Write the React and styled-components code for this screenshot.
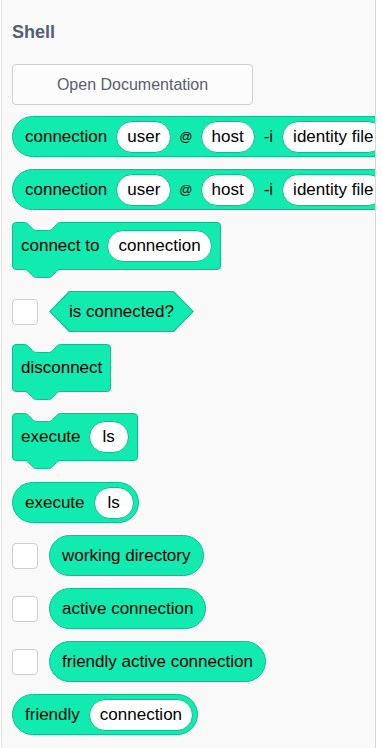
import React from 'react'
import styled, {createGlobalStyle} from 'styled-components'

const GREEN = '#12ebb0'
const EDGE = '#0dbf8d'
const PANEL = '#f9f9f9'

// scratch style notch: 36 wide, 8 deep
const CURVE = 'c 2,0 3,1 4,2 l 4,4 c 1,1 2,2 4,2 h 12 c 2,0 3,-1 4,-2 l 4,-4 c 1,-1 2,-2 4,-2'

const GlobalStyle = createGlobalStyle`
  html, body {
    margin: 0;
    padding: 0;
    background: #fff;
  }
  body {
    font-family: "Liberation Sans", Arial, sans-serif;
  }
`

const Panel = styled.div`
  box-sizing: border-box;
  width: 375px;
  height: 748px;
  margin-left: 1px;
  border-left: 1px solid #e6e6e6;
  border-right: 1px solid #d6d6d6;
  background: ${PANEL};
  overflow: hidden;
  padding: 21px 0 0 10px;
`

const Title = styled.div`
  font-size: 18px;
  font-weight: bold;
  line-height: 22px;
  color: #575e75;
`

const DocButton = styled.button`
  display: block;
  box-sizing: border-box;
  width: 241px;
  height: 41px;
  margin-top: 21px;
  padding: 0;
  border: 1px solid #cfcfcf;
  border-radius: 4px;
  background: #fcfcfc;
  color: #575e75;
  font-family: inherit;
  font-size: 16px;
`

const Blocks = styled.div`
  display: flex;
  flex-direction: column;
  align-items: flex-start;
  gap: 12px;
  margin-top: 11px;
`

const Reporter = styled.div`
  box-sizing: border-box;
  height: 41px;
  display: flex;
  align-items: center;
  flex-shrink: 0;
  gap: 9px;
  padding: 0 ${p => (p.$tight ? 4 : 12)}px 0 12px;
  background: ${GREEN};
  border: 1px solid ${EDGE};
  border-radius: 21px;
  white-space: nowrap;
  font-size: 17px;
  color: #000;
`

const Command = styled.div`
  position: relative;
  box-sizing: border-box;
  height: 48px;
  display: flex;
  align-items: center;
  flex-shrink: 0;
  gap: 8px;
  padding: 0 8px;
  margin-bottom: 9px;
  background: ${GREEN};
  border: 1px solid ${EDGE};
  border-radius: 4px;
  white-space: nowrap;
  font-size: 17px;
  color: #000;
`

const Notch = styled.svg`
  position: absolute;
  left: 11px;
  top: -1px;
  overflow: visible;
`

const Tab = styled.svg`
  position: absolute;
  left: 11px;
  top: 100%;
  overflow: visible;
`

const Input = styled.span`
  box-sizing: border-box;
  height: 32px;
  min-width: 40px;
  padding: 0 10px;
  display: inline-flex;
  align-items: center;
  justify-content: center;
  flex-shrink: 0;
  background: #fff;
  border: 1px solid ${EDGE};
  border-radius: 16px;
`

const At = styled.span`
  font-size: 13px;
  margin: 0 -1px;
`

const Row = styled.div`
  display: flex;
  align-items: center;
  gap: 11px;
`

const Check = styled.span`
  box-sizing: border-box;
  width: 26px;
  height: 26px;
  flex-shrink: 0;
  border: 1px solid #cdcdcd;
  border-radius: 4px;
  background: #fff;
`

const Hex = styled.div`
  box-sizing: border-box;
  height: 41px;
  padding: 1px 1.4px;
  background: ${EDGE};
  clip-path: polygon(20px 0, calc(100% - 20px) 0, 100% 50%, calc(100% - 20px) 100%, 20px 100%, 0 50%);
`

const HexFill = styled.div`
  height: 39px;
  display: flex;
  align-items: center;
  padding: 0 18.6px;
  background: ${GREEN};
  clip-path: polygon(19.5px 0, calc(100% - 19.5px) 0, 100% 50%, calc(100% - 19.5px) 100%, 19.5px 100%, 0 50%);
  white-space: nowrap;
  font-size: 17px;
  color: #000;
`

const StackBlock = ({children}) => (
  <Command>
    <Notch width="38" height="10">
      <path d={`M 0.5,-0.5 V 0.5 ${CURVE} V -0.5 Z`} fill={PANEL}/>
      <path d={`M 0.5,0.5 ${CURVE}`} fill="none" stroke={EDGE}/>
    </Notch>
    {children}
    <Tab width="38" height="10">
      <path d={`M 0.5,-0.2 V 0.5 ${CURVE} V -0.2 Z`} fill={GREEN}/>
      <path d={`M 0.5,0.5 ${CURVE}`} fill="none" stroke={EDGE}/>
    </Tab>
  </Command>
)

const ConnectionReporter = () => (
  <Reporter>
    <span>connection</span>
    <Input>user</Input>
    <At>@</At>
    <Input>host</Input>
    <span>-i</span>
    <Input>identity file</Input>
  </Reporter>
)

export default function App() {
  return (
    <Panel>
      <GlobalStyle/>
      <Title>Shell</Title>
      <DocButton>Open Documentation</DocButton>
      <Blocks>
        <ConnectionReporter/>
        <ConnectionReporter/>
        <StackBlock>
          <span>connect to</span>
          <Input>connection</Input>
        </StackBlock>
        <Row>
          <Check/>
          <Hex>
            <HexFill>is connected?</HexFill>
          </Hex>
        </Row>
        <StackBlock>
          <span>disconnect</span>
        </StackBlock>
        <StackBlock>
          <span>execute</span>
          <Input>ls</Input>
        </StackBlock>
        <Reporter $tight>
          <span>execute</span>
          <Input>ls</Input>
        </Reporter>
        <Row>
          <Check/>
          <Reporter>working directory</Reporter>
        </Row>
        <Row>
          <Check/>
          <Reporter>active connection</Reporter>
        </Row>
        <Row>
          <Check/>
          <Reporter>friendly active connection</Reporter>
        </Row>
        <Reporter $tight>
          <span>friendly</span>
          <Input>connection</Input>
        </Reporter>
      </Blocks>
    </Panel>
  )
}
